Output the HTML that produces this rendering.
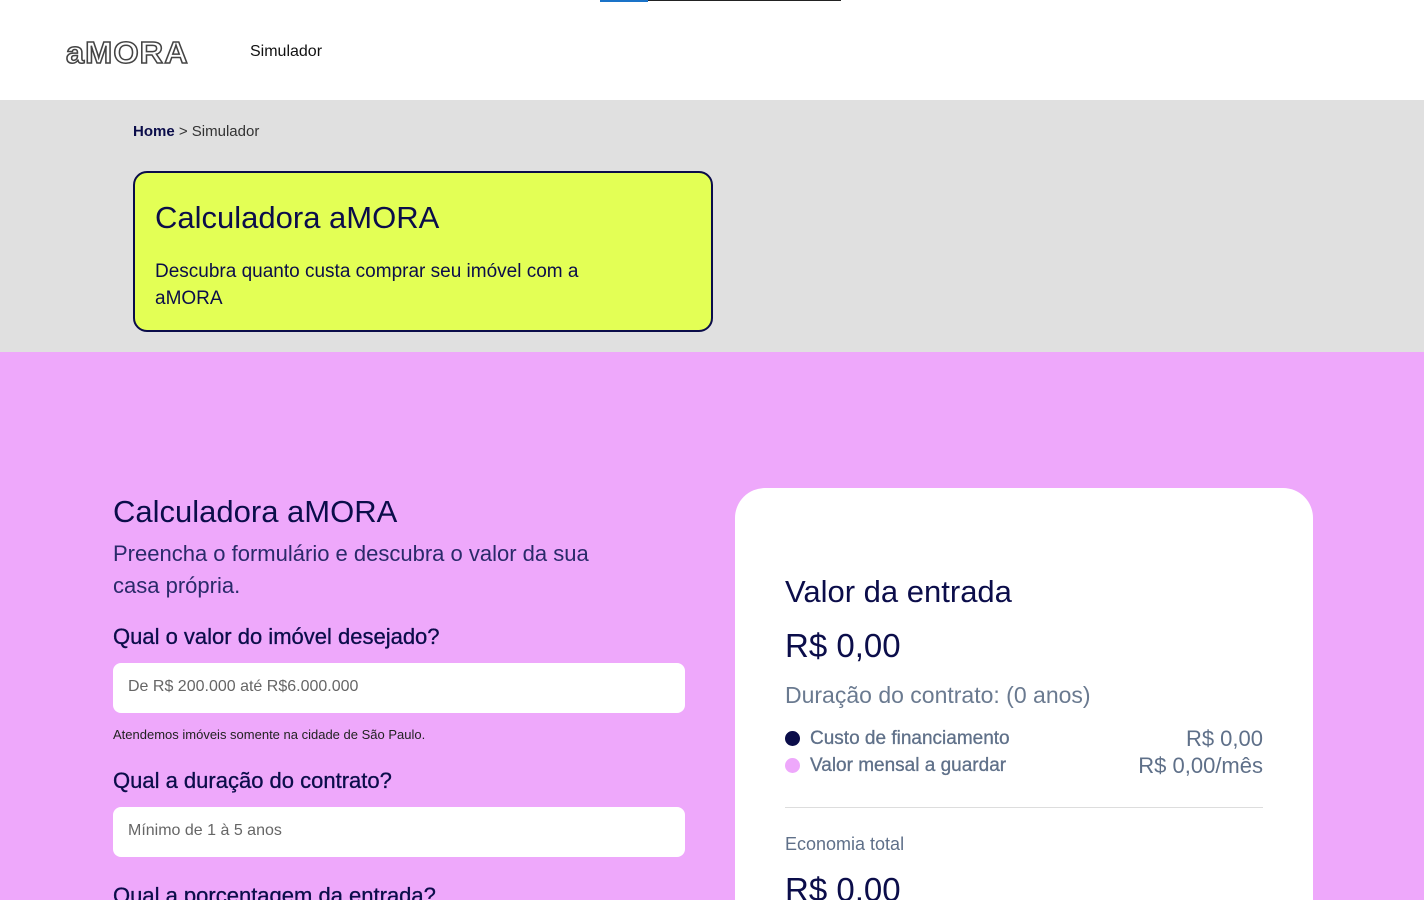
<!DOCTYPE html>
<html><head><meta charset="utf-8"><style>
*{margin:0;padding:0;box-sizing:border-box}
html{width:1424px;height:900px;overflow:hidden}
body{width:1424px;height:900px;overflow:hidden;font-family:"Liberation Sans",sans-serif;color:#0b0d4a;background:#eea8fb;position:relative}
.hdr{position:absolute;left:0;top:0;width:1424px;height:100px;background:#fff;box-shadow:0 2px 4px rgba(0,0,0,.15)}
.bar1{position:absolute;left:600px;top:0;width:48px;height:2px;background:#1a73c8}
.bar2{position:absolute;left:648px;top:0;width:193px;height:1px;background:#222}
.logo{position:absolute;left:66px;top:35px;font-size:31px;font-weight:bold;color:#fff;-webkit-text-stroke:1.5px #444;letter-spacing:1px;transform:scaleX(1.05);transform-origin:left}
.nav{position:absolute;left:250px;top:43px;font-size:16px;color:#111}
.gray{position:absolute;left:0;top:100px;width:1424px;height:252px;background:#e0e0e0}
.bc{position:absolute;left:133px;top:123px;font-size:15px;color:#333}
.bc b{color:#0b0d4a}
.ycard{position:absolute;left:133px;top:171px;width:580px;height:161px;background:#e3ff55;border:2px solid #0b0d4a;border-radius:14px;padding:27px 20px}
.ycard h1{font-size:31px;font-weight:normal;margin-bottom:22px}
.ycard p{font-size:19px;line-height:27px;width:480px}
.left{position:absolute;left:113px;top:494px;width:572px}
.left h2{font-size:31px;font-weight:normal}
.left .sub{font-size:22px;line-height:32px;color:#2a2a6a;margin-top:8px;width:520px}
.q{font-size:22px;margin-top:24px;font-weight:500;-webkit-text-stroke:0.3px #0b0d4a}
.inp{background:#fff;border-radius:8px;height:50px;margin-top:13px;padding:15px;font-size:16px;color:#666}
.note{font-size:13px;color:#222;margin-top:14px}
.card{position:absolute;left:735px;top:488px;width:578px;height:412px;background:#fff;border-radius:30px 30px 0 0;padding:86px 50px 0 50px;overflow:hidden}
.card h3{font-size:31px;font-weight:normal}
.big{font-size:33px;margin-top:17px}
.dur{font-size:23px;color:#6a7a90;margin-top:17px}
.row{display:flex;justify-content:space-between;font-size:19px;color:#5f7089;line-height:27px;-webkit-text-stroke:0.3px #5f7089}
.row span.l{display:flex;align-items:center}
.dot{width:15px;height:15px;border-radius:50%;display:inline-block;margin-right:10px}
.row .r{font-size:22px;-webkit-text-stroke:0}
hr{border:none;border-top:1px solid #ddd;margin:28px 0 26px}
</style></head><body>
<div class="hdr"><div class="bar1"></div><div class="bar2"></div>
<div class="logo">aMORA</div><div class="nav">Simulador</div></div>
<div class="gray"></div>
<div class="bc"><b>Home</b> &gt; Simulador</div>
<div class="ycard"><h1>Calculadora aMORA</h1><p>Descubra quanto custa comprar seu imóvel com a aMORA</p></div>
<div class="left">
<h2>Calculadora aMORA</h2>
<div class="sub">Preencha o formulário e descubra o valor da sua casa própria.</div>
<div class="q" style="margin-top:22px">Qual o valor do imóvel desejado?</div>
<div class="inp">De R$ 200.000 até R$6.000.000</div>
<div class="note">Atendemos imóveis somente na cidade de São Paulo.</div>
<div class="q" style="margin-top:26px">Qual a duração do contrato?</div>
<div class="inp">Mínimo de 1 à 5 anos</div>
<div class="q" style="margin-top:26px">Qual a porcentagem da entrada?</div>
</div>
<div class="card">
<h3>Valor da entrada</h3>
<div class="big">R$ 0,00</div>
<div class="dur">Duração do contrato: (0 anos)</div>
<div style="margin-top:16px">
<div class="row"><span class="l"><i class="dot" style="background:#0b0d4a"></i>Custo de financiamento</span><span class="r">R$ 0,00</span></div>
<div class="row"><span class="l"><i class="dot" style="background:#eea8fb"></i>Valor mensal a guardar</span><span class="r">R$ 0,00/mês</span></div>
</div>
<hr>
<div style="font-size:18px;color:#5f7089">Economia total</div>
<div class="big" style="margin-top:16px">R$ 0,00</div>
</div>
</body></html>
